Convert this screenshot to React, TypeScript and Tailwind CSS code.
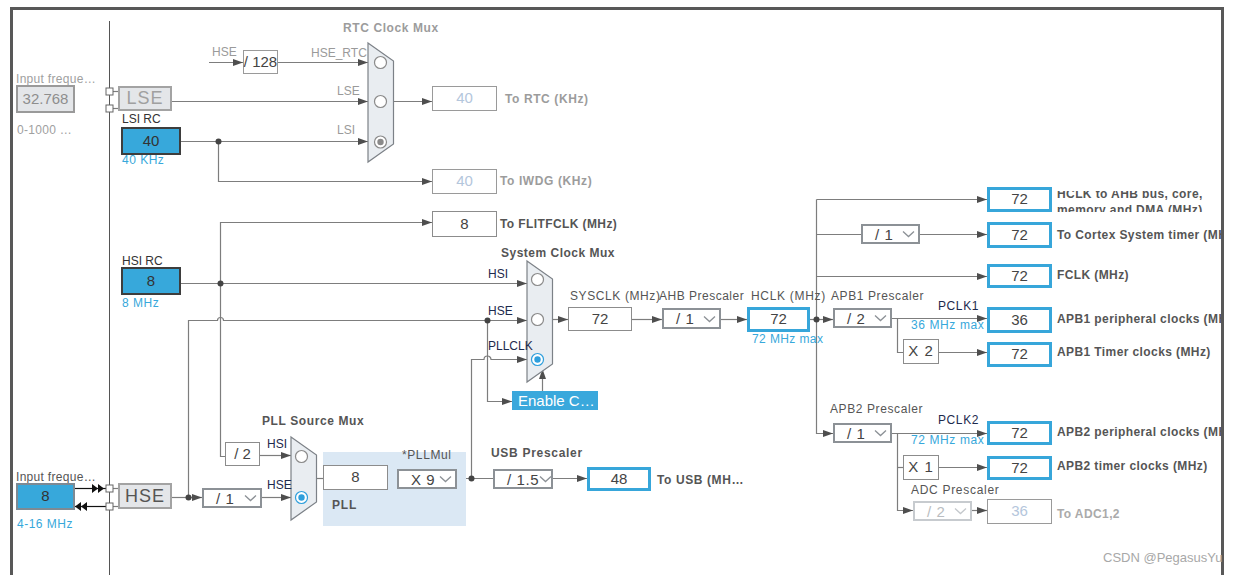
import React from "react";

const FONT = "font-['Liberation_Sans','Arial',sans-serif]";

type Wire = { d: string; arrow?: boolean };

const wires: Wire[] = [
  { d: "M209 62.5H243", arrow: true },
  { d: "M278 62.5H368", arrow: true },
  { d: "M172 101.5H368", arrow: true },
  { d: "M181 141.5H368", arrow: true },
  { d: "M218.5 141.5V181.5H432", arrow: true },
  { d: "M394 101.5H432", arrow: true },
  { d: "M113 91.5H118" },
  { d: "M113 108.5H118" },
  { d: "M113 488.5H118" },
  { d: "M113 506.5H118" },
  { d: "M225 456.5H220.5V222.5H432", arrow: true },
  { d: "M181 283.5H527", arrow: true },
  { d: "M188.5 497.5V320.5H217.5A3 3 0 0 1 223.5 320.5H527", arrow: true },
  { d: "M487.5 320.5V401.5H512", arrow: true },
  { d: "M471.5 478.5V359.5H484A3.5 3.5 0 0 1 491 359.5H527", arrow: true },
  { d: "M542.5 391V369", arrow: true },
  { d: "M552 319.5H568", arrow: true },
  { d: "M632 319.5H662", arrow: true },
  { d: "M721 319.5H747", arrow: true },
  { d: "M810 319.5H833", arrow: true },
  { d: "M816.5 199.5V433.5H833", arrow: true },
  { d: "M816.5 199.5H987", arrow: true },
  { d: "M816.5 234.5H861" },
  { d: "M816.5 276.5H987", arrow: true },
  { d: "M920 234.5H987", arrow: true },
  { d: "M892 318.5H987", arrow: true },
  { d: "M897.5 318.5V352.5H903" },
  { d: "M939 352.5H987", arrow: true },
  { d: "M892 433.5H987", arrow: true },
  { d: "M897.5 433.5V510.5H913", arrow: true },
  { d: "M897.5 467.5H903" },
  { d: "M939 467.5H987", arrow: true },
  { d: "M972 510.5H987", arrow: true },
  { d: "M260 455.5H291", arrow: true },
  { d: "M172 497.5H202", arrow: true },
  { d: "M262 497.5H291", arrow: true },
  { d: "M316 478.5H323" },
  { d: "M388 478.5H397" },
  { d: "M457 478.5H493" },
  { d: "M553 478.5H587", arrow: true },
];

const dots: [number, number][] = [
  [218.5, 141.5],
  [220.5, 283.5],
  [487.5, 320.5],
  [188.5, 497.5],
  [471.5, 478.5],
  [816.5, 319.5],
];

function Mux({ x, y, h }: { x: number; y: number; h: number }) {
  return (
    <polygon
      points={`${x},${y} ${x + 25.5},${y + 18} ${x + 25.5},${y + h - 18} ${x},${y + h}`}
      fill="#e9edf1"
      stroke="#7c8187"
      strokeWidth="1.2"
    />
  );
}

function Radio({ cx, cy, on, blue }: { cx: number; cy: number; on?: boolean; blue?: boolean }) {
  const c = blue ? "#2f9fdc" : "#8a8a8a";
  return (
    <g>
      <circle cx={cx} cy={cy} r="6" fill="white" stroke={c} strokeWidth="1.2" />
      {on && <circle cx={cx} cy={cy} r="3.2" fill={c} />}
    </g>
  );
}

function Wires() {
  return (
    <svg className="absolute inset-0" width="1245" height="575" viewBox="0 0 1245 575">
      <defs>
        <marker id="ah" markerUnits="userSpaceOnUse" markerWidth="10" markerHeight="8" refX="10" refY="4" orient="auto">
          <path d="M0 0.5L10 4L0 7.5z" fill="#4e4e4e" />
        </marker>
      </defs>
      <path d="M109.5 21V575" stroke="#555" strokeWidth="1" />
      {wires.map((w, i) => (
        <path key={i} d={w.d} fill="none" stroke="#7d7d7d" strokeWidth="1.2" markerEnd={w.arrow ? "url(#ah)" : undefined} />
      ))}
      {dots.map(([x, y], i) => (
        <circle key={i} cx={x} cy={y} r="3" fill="#444" />
      ))}
      {/* HSE input arrows */}
      <path d="M75 488.5H106" stroke="#111" strokeWidth="1.2" />
      <path d="M92 484L98 488.5L92 493zM98 484L104 488.5L98 493z" fill="#111" />
      <path d="M75 506.5H106" stroke="#111" strokeWidth="1.2" />
      <path d="M87 502L81 506.5L87 511zM81 502L75 506.5L81 511z" fill="#111" />
      {/* muxes */}
      <Mux x={368} y={43} h={119} />
      <Radio cx={380.5} cy={62.5} />
      <Radio cx={380.5} cy={101.5} />
      <Radio cx={380.5} cy={142} on />
      <Mux x={527} y={261} h={121} />
      <Radio cx={537.5} cy={279.5} />
      <Radio cx={537.5} cy={319.5} />
      <Radio cx={537.5} cy={359.5} on blue />
      <Mux x={291} y={437} h={83} />
      <Radio cx={301.5} cy={456.5} />
      <Radio cx={301.5} cy={497.5} on blue />
      {/* pins on the rail */}
      {[88, 105, 485, 503].map((y) => (
        <rect key={y} x="106" y={y} width="7" height="7" fill="white" stroke="#666" strokeWidth="1" />
      ))}
    </svg>
  );
}

function Label({ className, children }: { className: string; children: React.ReactNode }) {
  return <span className={`absolute whitespace-nowrap leading-[14px] ${className}`}>{children}</span>;
}

function Box({ className, children }: { className: string; children: React.ReactNode }) {
  return <div className={`absolute flex items-center justify-center whitespace-nowrap text-[15px] ${className}`}>{children}</div>;
}

function Select({ className, value, disabled }: { className: string; value: string; disabled?: boolean }) {
  return (
    <div
      className={`absolute flex items-center bg-white border-2 ${
        disabled ? "border-[#c7cbcf] text-[#b9bdc1]" : "border-[#8c9196] text-[#444]"
      } ${className}`}
    >
      <span className="flex-1 pl-[12px] text-[15px] leading-none tracking-[0.6px] whitespace-nowrap">{value}</span>
      <svg className="mr-[3px] shrink-0" width="13" height="8" viewBox="0 0 13 8">
        <path d="M1 1.5L6.5 6.5L12 1.5" fill="none" stroke={disabled ? "#c4c8cc" : "#8c9196"} strokeWidth="1.3" />
      </svg>
    </div>
  );
}

function OutLabel({ className, children, dim }: { className: string; children: React.ReactNode; dim?: boolean }) {
  return (
    <Label className={`left-[1057px] text-[12px] font-bold tracking-[0.4px] ${dim ? "text-[#aaa]" : "text-[#555]"} ${className}`}>
      {children}
    </Label>
  );
}

export default function App() {
  return (
    <div className={`relative w-[1245px] h-[575px] bg-white pl-[10px] pt-[7px] overflow-hidden ${FONT}`}>
      <div className="relative w-[1214px] h-[568px] border-[3px] border-b-0 border-[#585858] overflow-hidden">
        <div className="absolute left-[-13px] top-[-10px] w-[1245px] h-[575px]">
          <Wires />

          {/* RTC section */}
          <Label className="left-[343px] top-[21px] text-[12px] font-bold tracking-[0.6px] text-[#9c9c9c]">RTC Clock Mux</Label>
          <Label className="left-[212px] top-[45px] text-[12px] text-[#9a9a9a]">HSE</Label>
          <Box className="left-[243px] top-[50px] w-[35px] h-[24px] border border-[#9a9a9a] bg-white text-[#444] text-[14px]">/ 128</Box>
          <Label className="left-[311px] top-[46px] text-[12px] text-[#9a9a9a]">HSE_RTC</Label>
          <Label className="left-[337px] top-[84px] text-[12px] text-[#9a9a9a]">LSE</Label>
          <Label className="left-[337px] top-[123px] text-[12px] text-[#9a9a9a]">LSI</Label>
          <Box className="left-[432px] top-[86px] w-[65px] h-[25px] border border-[#9a9a9a] bg-white text-[#b4c6dc]">40</Box>
          <Label className="left-[505px] top-[92px] text-[12px] font-bold tracking-[0.6px] text-[#9c9c9c]">To RTC (KHz)</Label>
          <Box className="left-[432px] top-[169px] w-[65px] h-[25px] border border-[#9a9a9a] bg-white text-[#b4c6dc]">40</Box>
          <Label className="left-[500px] top-[174px] text-[12px] font-bold tracking-[0.6px] text-[#9c9c9c]">To IWDG (KHz)</Label>

          {/* LSE / LSI */}
          <Label className="left-[16px] top-[72px] text-[12px] tracking-[0.3px] text-[#a0a0a0]">Input freque…</Label>
          <Box className="left-[16px] top-[85px] w-[59px] h-[28px] border-2 border-[#9a9a9a] bg-[#e4e6e9] text-[#8e8e8e]">32.768</Box>
          <Label className="left-[17px] top-[123px] text-[12px] tracking-[0.3px] text-[#a0a0a0]">0-1000 …</Label>
          <Box className="left-[118px] top-[86px] w-[54px] h-[25px] border-2 border-[#a3a3a3] bg-[#e4e6e9] text-[18px] tracking-[1px] text-[#a0a0a0]">LSE</Box>
          <Label className="left-[122px] top-[112px] text-[12px] text-[#333]">LSI RC</Label>
          <Box className="left-[121px] top-[127px] w-[60px] h-[28px] border-2 border-[#3d3d3d] bg-[#37a8db] text-[#333]">40</Box>
          <Label className="left-[122px] top-[153px] text-[12px] tracking-[0.5px] text-[#37a8db]">40 KHz</Label>

          {/* FLITF */}
          <Box className="left-[432px] top-[211px] w-[65px] h-[26px] border border-[#8c8c8c] bg-white text-[#444]">8</Box>
          <Label className="left-[500px] top-[217px] text-[12px] font-bold tracking-[0.4px] text-[#555]">To FLITFCLK (MHz)</Label>

          {/* HSI */}
          <Label className="left-[122px] top-[254px] text-[12px] text-[#333]">HSI RC</Label>
          <Box className="left-[121px] top-[267px] w-[60px] h-[28px] border-2 border-[#3d3d3d] bg-[#37a8db] text-[#333]">8</Box>
          <Label className="left-[122px] top-[296px] text-[12px] tracking-[0.5px] text-[#37a8db]">8 MHz</Label>

          {/* System clock mux */}
          <Label className="left-[501px] top-[246px] text-[12px] font-bold tracking-[0.5px] text-[#555]">System Clock Mux</Label>
          <Label className="left-[488px] top-[267px] text-[12px] text-[#1d2a4d]">HSI</Label>
          <Label className="left-[488px] top-[304px] text-[12px] text-[#1d2a4d]">HSE</Label>
          <Label className="left-[488px] top-[339px] text-[12px] text-[#1d2a4d]">PLLCLK</Label>
          <div className="absolute left-[512px] top-[391px] w-[86px] h-[19px] bg-[#3aa8dc] pl-[6px] text-[15px] leading-[19px] text-white whitespace-nowrap">
            Enable C…
          </div>

          {/* SYSCLK / AHB / HCLK */}
          <Label className="left-[570px] top-[289px] text-[12px] tracking-[0.6px] text-[#555]">SYSCLK (MHz)</Label>
          <Box className="left-[568px] top-[307px] w-[64px] h-[24px] border border-[#8c8c8c] bg-white text-[#444]">72</Box>
          <Label className="left-[659px] top-[289px] text-[12px] tracking-[0.5px] text-[#555]">AHB Prescaler</Label>
          <Select className="left-[662px] top-[308px] w-[59px] h-[21px]" value="/ 1" />
          <Label className="left-[751px] top-[289px] text-[12px] tracking-[0.7px] text-[#555]">HCLK (MHz)</Label>
          <Box className="left-[747px] top-[307px] w-[63px] h-[25px] border-[3px] border-[#37a6da] bg-white text-[#444]">72</Box>
          <Label className="left-[752px] top-[332px] text-[12px] tracking-[0.4px] text-[#37a8db]">72 MHz max</Label>

          {/* HCLK outputs */}
          <Select className="left-[861px] top-[224px] w-[59px] h-[20px]" value="/ 1" />
          <Box className="left-[987px] top-[187px] w-[65px] h-[25px] border-[3px] border-[#37a6da] bg-white text-[#444]">72</Box>
          <div className="absolute left-[1057px] top-[191px] h-[21px] w-[170px] overflow-hidden">
            <div className="mt-[-5px] text-[12px] font-bold tracking-[0.4px] leading-[16px] text-[#555] whitespace-nowrap">
              HCLK to AHB bus, core,
              <br />
              memory and DMA (MHz)
            </div>
          </div>
          <Box className="left-[987px] top-[222px] w-[65px] h-[26px] border-[3px] border-[#37a6da] bg-white text-[#444]">72</Box>
          <OutLabel className="top-[228px]">To Cortex System timer (MHz)</OutLabel>
          <Box className="left-[987px] top-[264px] w-[65px] h-[24px] border-[3px] border-[#37a6da] bg-white text-[#444]">72</Box>
          <OutLabel className="top-[268px]">FCLK (MHz)</OutLabel>

          {/* APB1 */}
          <Label className="left-[831px] top-[289px] text-[12px] tracking-[0.6px] text-[#555]">APB1 Prescaler</Label>
          <Select className="left-[833px] top-[308px] w-[59px] h-[20px]" value="/ 2" />
          <Label className="left-[938px] top-[299px] text-[12px] tracking-[0.6px] text-[#1d2a4d]">PCLK1</Label>
          <Label className="left-[911px] top-[318px] text-[12px] tracking-[0.6px] text-[#37a8db]">36 MHz max</Label>
          <Box className="left-[987px] top-[307px] w-[65px] h-[26px] border-[3px] border-[#37a6da] bg-white text-[#444]">36</Box>
          <OutLabel className="top-[312px]">APB1 peripheral clocks (MHz)</OutLabel>
          <Box className="left-[903px] top-[339px] w-[36px] h-[25px] border border-[#8c8c8c] bg-white text-[#444] tracking-[1px]">X 2</Box>
          <Box className="left-[987px] top-[342px] w-[65px] h-[25px] border-[3px] border-[#37a6da] bg-white text-[#444]">72</Box>
          <OutLabel className="top-[345px]">APB1 Timer clocks (MHz)</OutLabel>

          {/* APB2 */}
          <Label className="left-[830px] top-[402px] text-[12px] tracking-[0.6px] text-[#555]">APB2 Prescaler</Label>
          <Select className="left-[833px] top-[423px] w-[59px] h-[20px]" value="/ 1" />
          <Label className="left-[938px] top-[413px] text-[12px] tracking-[0.6px] text-[#1d2a4d]">PCLK2</Label>
          <Label className="left-[911px] top-[433px] text-[12px] tracking-[0.6px] text-[#37a8db]">72 MHz max</Label>
          <Box className="left-[987px] top-[421px] w-[65px] h-[24px] border-[3px] border-[#37a6da] bg-white text-[#444]">72</Box>
          <OutLabel className="top-[425px]">APB2 peripheral clocks (MHz)</OutLabel>
          <Box className="left-[903px] top-[455px] w-[36px] h-[25px] border border-[#8c8c8c] bg-white text-[#444] tracking-[1px]">X 1</Box>
          <Box className="left-[987px] top-[456px] w-[65px] h-[24px] border-[3px] border-[#37a6da] bg-white text-[#444]">72</Box>
          <OutLabel className="top-[459px]">APB2 timer clocks (MHz)</OutLabel>
          <Label className="left-[911px] top-[483px] text-[12px] tracking-[0.7px] text-[#555]">ADC Prescaler</Label>
          <Select className="left-[913px] top-[501px] w-[59px] h-[20px]" value="/ 2" disabled />
          <Box className="left-[987px] top-[499px] w-[65px] h-[25px] border border-[#9a9a9a] bg-white text-[#b4c6dc]">36</Box>
          <OutLabel className="top-[507px]" dim>
            To ADC1,2
          </OutLabel>

          {/* HSE input */}
          <Label className="left-[16px] top-[470px] text-[12px] tracking-[0.3px] text-[#555]">Input freque…</Label>
          <Box className="left-[16px] top-[483px] w-[59px] h-[27px] border-2 border-[#7d8a94] bg-[#37a8db] text-[#333]">8</Box>
          <Label className="left-[17px] top-[517px] text-[12px] tracking-[0.5px] text-[#37a8db]">4-16 MHz</Label>
          <Box className="left-[118px] top-[483px] w-[54px] h-[26px] border-2 border-[#a3a3a3] bg-[#e4e6e9] text-[18px] tracking-[1px] text-[#555]">HSE</Box>
          <Select className="left-[202px] top-[488px] w-[60px] h-[20px]" value="/ 1" />
          <Box className="left-[225px] top-[442px] w-[35px] h-[24px] border border-[#8c8c8c] bg-white text-[#444]">/ 2</Box>

          {/* PLL */}
          <Label className="left-[262px] top-[414px] text-[12px] font-bold tracking-[0.6px] text-[#555]">PLL Source Mux</Label>
          <Label className="left-[267px] top-[437px] text-[12px] text-[#1d2a4d]">HSI</Label>
          <Label className="left-[267px] top-[478px] text-[12px] text-[#1d2a4d]">HSE</Label>
          <div className="absolute left-[323px] top-[452px] w-[143px] h-[74px] bg-[#dbe8f4]" />
          <Box className="left-[323px] top-[465px] w-[65px] h-[25px] border border-[#8c8c8c] bg-white text-[#444]">8</Box>
          <Label className="left-[402px] top-[448px] text-[12px] tracking-[0.6px] text-[#555]">*PLLMul</Label>
          <Select className="left-[397px] top-[469px] w-[60px] h-[20px]" value="X 9" />
          <Label className="left-[332px] top-[498px] text-[12px] font-bold tracking-[0.8px] text-[#555]">PLL</Label>

          {/* USB */}
          <Label className="left-[491px] top-[446px] text-[12px] font-semibold tracking-[0.7px] text-[#555]">USB Prescaler</Label>
          <Select className="left-[493px] top-[469px] w-[60px] h-[20px]" value="/ 1.5" />
          <Box className="left-[587px] top-[467px] w-[64px] h-[24px] border-[3px] border-[#37a6da] bg-white text-[#444]">48</Box>
          <Label className="left-[657px] top-[473px] text-[12px] font-bold tracking-[0.6px] text-[#555]">To USB (MH…</Label>
        </div>
      </div>
      <span className="absolute left-[1103px] top-[551px] text-[13px] leading-[14px] text-[#a8a8a8] whitespace-nowrap">CSDN @PegasusYu</span>
    </div>
  );
}
